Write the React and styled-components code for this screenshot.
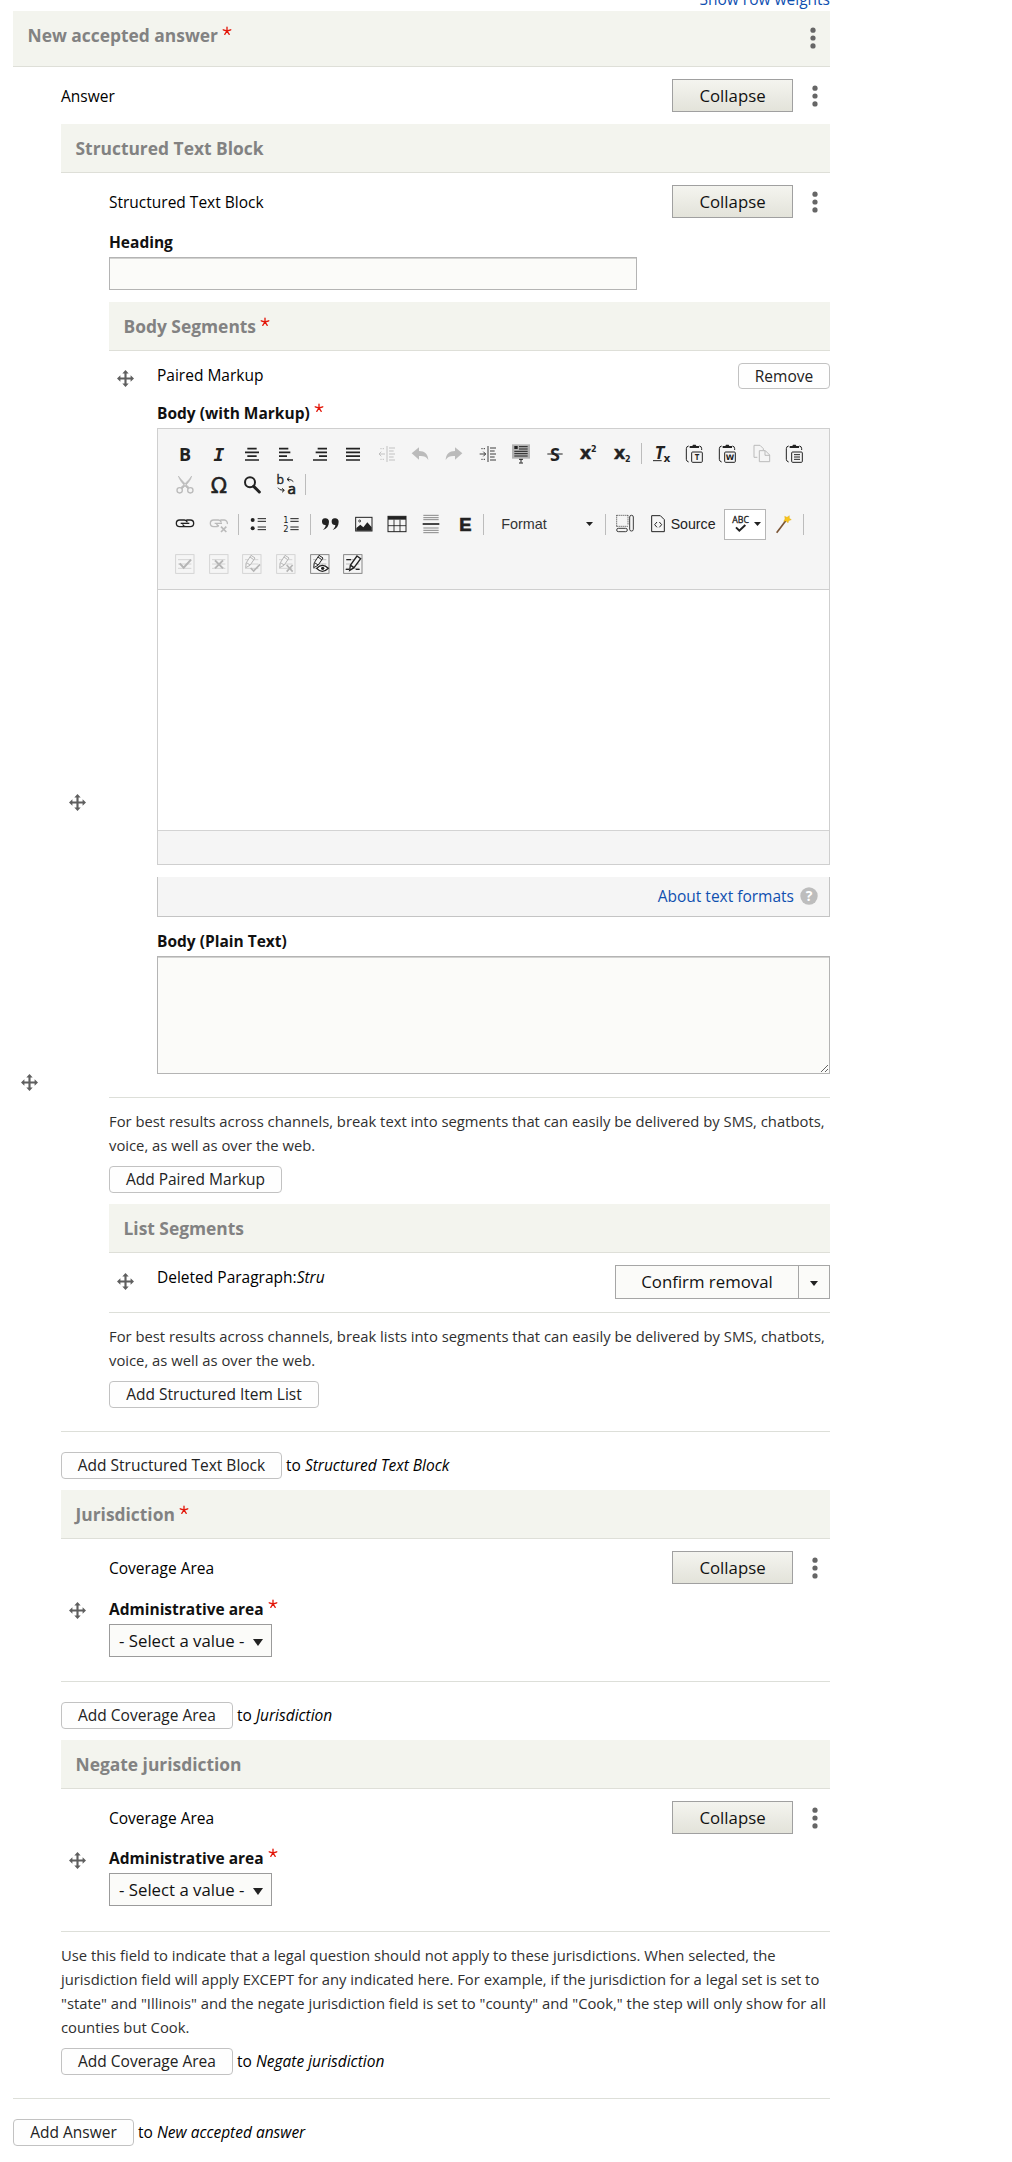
import React from "react";
import styled, { createGlobalStyle, css } from "styled-components";

const Global = createGlobalStyle`
  * { box-sizing: border-box; }
  body {
    margin: 0;
    background: #fff;
    color: #000;
    font: 15.5px/24px "Open Sans", "Noto Sans", sans-serif;
  }
  #root { height: 2162px; overflow: hidden; }
`;

/* ---------- page structure ---------- */
const Page = styled.main`
  width: 830px;
  padding-left: 13px;
`;
const WeightsBar = styled.div`
  height: 11px;
  overflow: hidden;
  display: flex;
  justify-content: flex-end;
  align-items: flex-end;
`;
const Link = styled.a`
  color: #0f4fb0;
  text-decoration: none;
  white-space: nowrap;
`;
const TableHead = styled.header`
  height: ${(p) => (p.$tall ? 56 : 49)}px;
  padding: 12px 11px 0 14.5px;
  background: #f3f4ee;
  border-bottom: 1px solid #dedfd8;
  display: flex;
  align-items: flex-start;
  justify-content: space-between;
`;
const Title = styled.h4`
  margin: 0;
  font-size: 17.4px;
  font-weight: 700;
  line-height: 24px;
  color: #828282;
  white-space: nowrap;
`;
const Row = styled.section`
  display: flex;
  border-bottom: 1px solid #dddfd9;
`;
const Handle = styled.div`
  flex: 0 0 48px;
  display: flex;
  padding: ${(p) => (p.$top ? `${p.$top}px 0 0 8px` : "0 0 0 8px")};
  align-items: ${(p) => (p.$top ? "flex-start" : "center")};
`;
const Cell = styled.div`
  flex: 1;
  min-width: 0;
  padding: 12px 0 ${(p) => p.$pb ?? 23}px;
`;
const TopBar = styled.div`
  height: ${(p) => p.$h || 33}px;
  display: flex;
  align-items: ${(p) => (p.$start ? "flex-start" : "center")};
  justify-content: space-between;
`;
const RaisedText = styled.span`
  padding-bottom: 2px;
`;
const Actions = styled.div`
  display: flex;
  align-items: center;
  gap: 13px;
  padding-right: 7px;
`;
const Nested = styled.div`
  margin-top: 12px;
`;
const AddBar = styled.div`
  display: flex;
  align-items: center;
  gap: 4px;
  padding: ${(p) => p.$p || "20px 0 11px"};
  white-space: nowrap;
`;
const Description = styled.p`
  margin: 11px 0 9px;
  font-size: 14.8px;
  line-height: 24px;
  color: #303030;
`;
const Line = styled.span`
  display: block;
  white-space: nowrap;
`;

/* ---------- controls ---------- */
const Collapse = styled.button`
  width: 121px;
  height: 33px;
  padding: 0;
  border: 1px solid #a0a0a0;
  background: linear-gradient(#f4f4ef, #e3e3da);
  font: 16.8px/30px "Open Sans", sans-serif;
  color: #111;
`;
const SmallButton = styled.button`
  height: ${(p) => p.$h || 27}px;
  width: ${(p) => p.$w}px;
  padding: 0 0 ${(p) => (p.$h ? 0 : 2)}px;
  border: 1px solid #c2c2c2;
  border-radius: 4px;
  background: #fefefe;
  font: 15.5px/22px "Open Sans", sans-serif;
  color: #222;
  white-space: nowrap;
`;
const Label = styled.label`
  display: block;
  height: 24px;
  margin: ${(p) => p.$mt || 12}px 0 3px;
  font-weight: 700;
  font-size: 15.5px;
  line-height: 24px;
  color: #111;
`;
const fieldBox = css`
  border: 1px solid #b4b4b4;
  border-radius: 0;
  background: #fbfbf9;
  box-shadow: inset 0 1px 0 #d2d2d0;
  outline: none;
`;
const TextField = styled.input`
  ${fieldBox}
  display: block;
  width: 528px;
  height: 33px;
`;
const TextArea = styled.textarea`
  ${fieldBox}
  display: block;
  width: 100%;
  height: 118px;
  resize: vertical;
`;
const SelectBox = styled.div`
  width: 163px;
  height: 33px;
  padding: 0 8px 0 9px;
  border: 1px solid #9b9b9b;
  background: #fbfbf9;
  display: flex;
  align-items: center;
  justify-content: space-between;
  font-size: 16.8px;
  white-space: nowrap;
  color: #111;
  svg { margin-top: 3px; }
`;
const SplitButton = styled.div`
  width: 215px;
  height: 34px;
  border: 1px solid #a6a6a6;
  background: #fbfbf9;
  display: grid;
  grid-template-columns: 1fr 31px;
`;
const SplitMain = styled.button`
  border: 0;
  padding: 0;
  background: none;
  font: 16.8px/30px "Open Sans", sans-serif;
  color: #111;
`;
const SplitToggle = styled.button`
  border: 0;
  border-left: 1px solid #a6a6a6;
  padding: 3px 0 0;
  background: none;
  display: grid;
  place-items: center;
`;

/* ---------- editor ---------- */
const Editor = styled.div`
  height: 437px;
  border: 1px solid #cfcfcf;
  display: flex;
  flex-direction: column;
`;
const Toolbar = styled.div`
  height: 161px;
  padding: 9px 0 0 10.5px;
  background: #f5f5f5;
  border-bottom: 1px solid #cfcfcf;
`;
const ToolRow = styled.div`
  display: flex;
  align-items: center;
  height: ${(p) => p.$h || 31}px;
  margin-top: ${(p) => p.$mt || 0}px;
`;
const Tool = styled.span`
  flex: 0 0 ${(p) => p.$w || 33.6}px;
  display: flex;
  align-items: center;
  justify-content: center;
  opacity: ${(p) => (p.$off ? 0.27 : 1)};
`;
const Sep = styled.i`
  flex: 0 0 1px;
  height: 21px;
  margin: 0 2.3px 0 2px;
  background: #bcbcbc;
`;
const Combo = styled.div`
  flex: 0 0 116px;
  display: flex;
  align-items: center;
  justify-content: space-between;
  padding: 0 10px 0 14.5px;
  font: 14.4px/20px "Liberation Sans", Arial, sans-serif;
  color: #333;
`;
const SourceTool = styled.div`
  flex: 0 0 82px;
  display: flex;
  align-items: center;
  gap: 3px;
  padding-left: 6px;
  font: 14.2px/20px "Liberation Sans", Arial, sans-serif;
  color: #222;
`;
const SpellTool = styled.div`
  flex: 0 0 42px;
  height: 31px;
  border: 1px solid #b6b6b6;
  background: #fff;
  display: flex;
  align-items: center;
  gap: 4px;
  padding-left: 5px;
`;
const EditArea = styled.div`
  flex: 1;
  background: #fff;
`;
const EditorFoot = styled.div`
  height: 34px;
  background: #f5f5f5;
  border-top: 1px solid #d3d3d3;
`;
const FormatBar = styled.div`
  height: 40px;
  margin-top: 12px;
  padding: 0 11px 2px;
  border: 1px solid #c4c4c4;
  border-top: 0;
  background: #f5f5f5;
  display: flex;
  align-items: center;
  justify-content: flex-end;
  gap: 6px;
`;

/* ---------- drawings ---------- */
const Star = styled.svg`
  width: 10px;
  height: 10px;
  margin-left: 4px;
  vertical-align: 6px;
`;
const Required = () => (
  <Star viewBox="0 0 18 18" stroke="#e3170a" strokeWidth="2.4" strokeLinecap="round">
    <path d="M9 9V2M9 9L2.2 6.8M9 9l6.8-2.2M9 9l-4 6M9 9l4 6" />
  </Star>
);
const Dots = () => (
  <svg width="6" height="24" viewBox="0 0 6 24" fill="#666">
    <circle cx="3" cy="4.2" r="2.6" />
    <circle cx="3" cy="12" r="2.6" />
    <circle cx="3" cy="19.9" r="2.6" />
  </svg>
);
const Move = () => (
  <svg width="17" height="17" viewBox="0 0 16 16" fill="#5f5f5f">
    <path d="M8 0L11 3.2H9v3.8h3.8V5L16 8l-3.2 3V9H9v3.8h2L8 16l-3-3.2h2V9H3.2v2L0 8l3.2-3v2H7V3.2H5z" />
  </svg>
);
const Caret = ({ w = 8, h = 5 }) => (
  <svg width={w} height={h} viewBox="0 0 8 5" preserveAspectRatio="none" fill="#222">
    <path d="M0 0h8L4 5z" />
  </svg>
);
const Ico = ({ children, ...rest }) => (
  <svg width="20" height="20" viewBox="0 0 60 60" fill="none" stroke="#222" strokeWidth="3" overflow="visible" {...rest}>
    {children}
  </svg>
);
const T = ({ x, y, s, f = "Open Sans", w = 700, i, children, ...rest }) => (
  <text x={x} y={y} fontSize={s} fontFamily={f} fontWeight={w} fontStyle={i ? "italic" : "normal"} fill="#222" stroke="none" textAnchor="middle" {...rest}>
    {children}
  </text>
);
const Bars = ({ rows }) => (
  <Ico strokeWidth="5">
    <path d={rows.map(([a, b], n) => `M${a} ${14 + n * 11.3}H${b}`).join("")} />
  </Ico>
);
const Indent = ({ out }) => (
  <Ico strokeWidth="2.6">
    <path d="M30 6v48" />
    <path d="M36 12h18M36 21h14M36 30h18M36 39h14M36 48h18" />
    <path d="M10 14h14M10 46h14" strokeDasharray="4 3" />
    <path d={out ? "M6 30h18M13 23l-7 7 7 7" : "M5 30h18M16 23l7 7-7 7"} />
  </Ico>
);
const Clip = ({ children }) => (
  <Ico strokeWidth="3">
    <path d="M11 6q-7 1-7 8v32q0 6 7 8M43 6q7 1 7 8v4" />
    <path d="M14 6h8l2-4h8l2 4h8v6H14z" fill="#222" stroke="none" />
    <rect x="20" y="24" width="32" height="31" rx="3" />
    {children}
  </Ico>
);
const Scayt = ({ pencil, dark, children }) => (
  <Ico stroke={dark ? "#222" : "#b5b5b5"} strokeWidth="3">
    <rect x="2" y="2" width="55" height="56" strokeWidth="2.6" stroke={dark ? "#777" : "#cfcfcf"} />
    <path d="M9 17h40M9 30h40M9 43h40" stroke={dark ? "#bbb" : "#d4d4d4"} />
    {pencil && <path d="M27 4l12 8-15 22-13 7 2-15zM14 26l10 7M24 9l11 8" fill="#f5f5f5" />}
    {children}
  </Ico>
);

const HeadDots = styled.div`
  display: flex;
  padding: 3px 3px 0 0;
`;
const FieldHead = ({ children, required, tall, dots }) => (
  <TableHead $tall={tall}>
    <Title>
      {children}
      {required && <Required />}
    </Title>
    {dots && (
      <HeadDots>
        <Dots />
      </HeadDots>
    )}
  </TableHead>
);
const DotWrap = styled.span`
  width: 17px;
  display: flex;
  justify-content: center;
`;
const ItemBar = ({ children }) => (
  <TopBar>
    <span>{children}</span>
    <Actions>
      <Collapse>Collapse</Collapse>
      <DotWrap>
        <Dots />
      </DotWrap>
    </Actions>
  </TopBar>
);

const EditorToolbar = () => (
  <Toolbar>
    <ToolRow>
      <Tool><Ico><T x={30} y={50} s={54}>B</T></Ico></Tool>
      <Tool><Ico><T x={30} y={50} s={54} f="DejaVu Sans Mono" i>I</T></Ico></Tool>
      <Tool><Bars rows={[[16, 44], [9, 51], [16, 44], [9, 51]]} /></Tool>
      <Tool><Bars rows={[[9, 37], [9, 43], [9, 33], [9, 51]]} /></Tool>
      <Tool><Bars rows={[[23, 51], [17, 51], [27, 51], [9, 51]]} /></Tool>
      <Tool><Bars rows={[[9, 51], [9, 51], [9, 51], [9, 51]]} /></Tool>
      <Tool $off><Indent out /></Tool>
      <Tool $off><Ico><path d="M5 28L27 10v11c17 0 27 9 28 27-7-11-15-13-28-12v11z" fill="#222" stroke="none" /></Ico></Tool>
      <Tool $off><Ico><path d="M55 28L33 10v11C16 21 6 30 5 48c7-11 15-13 28-12v11z" fill="#222" stroke="none" /></Ico></Tool>
      <Tool><Indent /></Tool>
      <Tool>
        <Ico>
          <rect x="3" y="1" width="54" height="43" fill="#b3b3b3" stroke="none" />
          <rect x="10" y="6" width="10" height="9" fill="#222" stroke="none" />
          <path d="M24 8h26M24 15h26M10 22h40M10 29h40M10 36h40" />
          <path d="M24 46h12M30 46v10M24 57h12" />
        </Ico>
      </Tool>
      <Tool><Ico><T x={30} y={50} s={54}>S</T><path d="M7 30h46" /></Ico></Tool>
      <Tool><Ico><T x={23} y={46} s={54} f="DejaVu Sans" stroke="#222" strokeWidth="1">x</T><T x={47} y={24} s={24} f="DejaVu Sans">2</T></Ico></Tool>
      <Tool><Ico><T x={23} y={44} s={54} f="DejaVu Sans" stroke="#222" strokeWidth="1">x</T><T x={47} y={54} s={24} f="DejaVu Sans">2</T></Ico></Tool>
      <Sep />
      <Tool><Ico><T x={26} y={44} s={52} f="DejaVu Sans Mono" i>T</T><T x={48} y={55} s={32} f="DejaVu Sans">x</T><path d="M6 50h26" /></Ico></Tool>
      <Tool><Clip><T x={36} y={48} s={24}>T</T></Clip></Tool>
      <Tool><Clip><T x={36} y={48} s={23} f="DejaVu Sans">W</T></Clip></Tool>
      <Tool $off><Ico><path d="M16 40H6V4h18l10 10v4" /><path d="M22 20h18l13 13v20H22zM39 20v14h14" /></Ico></Tool>
      <Tool><Clip><path d="M27 32h18M27 39h18M27 46h18" /></Clip></Tool>
    </ToolRow>
    <ToolRow>
      <Tool $off>
        <Ico fill="#222">
          <path d="M10 3c4 12 12 22 20 30l8 8 4-4C32 28 20 16 10 3zM50 3c-3 13-12 22-20 30l-8 8-4-4C28 28 42 16 50 3z" stroke="#222" strokeWidth="2" />
          <circle cx="14" cy="46" r="8" fill="none" strokeWidth="4" />
          <circle cx="46" cy="46" r="8" fill="none" strokeWidth="4" />
        </Ico>
      </Tool>
      <Tool><Ico><T x={30} y={53} s={64} f="DejaVu Sans" w={400} stroke="#222" strokeWidth="1.5">Ω</T></Ico></Tool>
      <Tool><Ico><circle cx="24" cy="22" r="15" strokeWidth="6" /><path d="M35 34l17 17" strokeWidth="9" strokeLinecap="round" /></Ico></Tool>
      <Tool>
        <Ico>
          <T x={13} y={26} s={37} w={400} stroke="#222" strokeWidth="1">b</T>
          <T x={47} y={56} s={46} w={400} stroke="#222" strokeWidth="2">a</T>
          <path d="M52 20q-4-7-18-7M40 7l-7 6 7 6M6 38q3 8 18 8M18 40l7 6-7 6" />
        </Ico>
      </Tool>
      <Sep />
    </ToolRow>
    <ToolRow $h={40} $mt={4}>
      <Tool>
        <Ico strokeWidth="4">
          <path d="M26 38H14a10 10 0 010-20h14a10 10 0 019 7M34 18h12a10 10 0 010 20H32a10 10 0 01-9-7" />
          <path d="M17 28h26" />
        </Ico>
      </Tool>
      <Tool $off>
        <Ico strokeWidth="4">
          <path d="M26 38H14a10 10 0 010-20h14a10 10 0 019 7M34 18h12a10 10 0 019 12M30 36q-6-1-7-6M17 28h22" />
          <path d="M36 38l16 16M52 38L36 54" strokeWidth="5" />
        </Ico>
      </Tool>
      <Sep />
      <Tool>
        <Ico>
          <circle cx="14" cy="18" r="6" fill="#222" stroke="none" />
          <circle cx="14" cy="43" r="6" fill="#222" stroke="none" />
          <path d="M29 14h25M29 22h25M29 39h25M29 47h25" />
        </Ico>
      </Tool>
      <Tool>
        <Ico>
          <T x={15} y={26} s={25} w={400} f="DejaVu Sans">1</T>
          <T x={15} y={54} s={25} w={400} f="DejaVu Sans">2</T>
          <path d="M28 14h25M28 22h25M28 39h25M28 47h25" />
        </Ico>
      </Tool>
      <Sep />
      <Tool>
        <Ico>
          <path d="M15 13a10 10 0 0112 10c0 12-6 21-18 25 6-6 8-10 8-15A10 10 0 0115 13zM44 13a10 10 0 0112 10c0 12-6 21-18 25 6-6 8-10 8-15A10 10 0 0144 13z" fill="#222" stroke="none" />
        </Ico>
      </Tool>
      <Tool>
        <Ico>
          <rect x="5" y="10" width="49" height="41" />
          <circle cx="17" cy="21" r="3" strokeWidth="2.5" />
          <path d="M7 50V42l12-10 9 8 12-15 13 15v10z" fill="#222" stroke="none" />
        </Ico>
      </Tool>
      <Tool>
        <Ico>
          <rect x="3" y="7" width="54" height="46" />
          <path d="M3 12h54" strokeWidth="10" />
          <path d="M3 35h54M21 17v36M39 17v36" strokeWidth="2.6" />
        </Ico>
      </Tool>
      <Tool>
        <Ico>
          <path d="M7 4h46M7 11h46M7 17h46M7 42h46M7 49h46M7 56h46" strokeWidth="2.6" stroke="#777" />
          <path d="M5 30h50" strokeWidth="5" />
        </Ico>
      </Tool>
      <Tool><Ico><T x={31} y={50} s={55} f="Liberation Sans" stroke="#222" strokeWidth="2">E</T></Ico></Tool>
      <Sep />
      <Combo>Format<Caret w={7} h={4} /></Combo>
      <Sep />
      <Tool>
        <Ico strokeWidth="2.6">
          <path d="M5 4v34M5 4h34M39 4v30M5 37h34" strokeDasharray="3 3" />
          <rect x="44" y="4" width="11" height="47" rx="5" />
          <rect x="5" y="43" width="32" height="10" rx="5" />
        </Ico>
      </Tool>
      <SourceTool>
        <Ico>
          <path d="M11 5h26l12 12v36H11zM27 24l-7 8 7 8M34 24l7 8-7 8" />
        </Ico>
        Source
      </SourceTool>
      <SpellTool>
        <Ico>
          <T x={32} y={28} s={29} w={400} textLength="50" lengthAdjust="spacingAndGlyphs" stroke="#222" strokeWidth="1">ABC</T>
          <path d="M18 40l10 10 18-17" strokeWidth="6" />
        </Ico>
        <Caret w={7} h={4} />
      </SpellTool>
      <Tool $w={35}>
        <Ico>
          <path d="M11 56L40 18" stroke="#7a5434" strokeWidth="5" />
          <path d="M35 7l7 3 7-5v8l6 4-8 3-2 7-5-6-8 1 4-7z" fill="#f8c51c" stroke="#dca40e" strokeWidth="1" />
        </Ico>
      </Tool>
      <Sep />
    </ToolRow>
    <ToolRow $h={40}>
      <Tool><Scayt><path d="M14 28l12 13 22-24" strokeWidth="6" /></Scayt></Tool>
      <Tool><Scayt><path d="M18 19l24 24M42 19L18 43" strokeWidth="6" /></Scayt></Tool>
      <Tool><Scayt pencil><path d="M26 42l9 9 19-20" strokeWidth="5" /></Scayt></Tool>
      <Tool><Scayt pencil><path d="M32 33l18 20M50 33L32 53" strokeWidth="5" /></Scayt></Tool>
      <Tool>
        <Scayt pencil dark>
          <path d="M20 43q17-18 35 0-18 18-35 0z" fill="#fff" strokeWidth="4" />
          <circle cx="38" cy="43" r="5" fill="#222" stroke="none" />
        </Scayt>
      </Tool>
      <Tool>
        <Scayt dark>
          <path d="M42 6l11 8-20 27-13 8 2-15zM23 34l10 7" fill="#f5f5f5" strokeWidth="4" />
          <path d="M8 46h10M38 46h12M10 17h14" strokeWidth="4" />
        </Scayt>
      </Tool>
    </ToolRow>
  </Toolbar>
);

const CoverageItem = ({ mt, pb }) => (
  <Row>
    <Handle>
      <Move />
    </Handle>
    <Cell $pb={pb}>
      <ItemBar>Coverage Area</ItemBar>
      <Label $mt={mt}>
        Administrative area
        <Required />
      </Label>
      <SelectBox>
        - Select a value - <Caret w={10} h={7} />
      </SelectBox>
    </Cell>
  </Row>
);
const HelpIcon = () => (
  <svg width="18" height="18" viewBox="0 0 18 18">
    <circle cx="9" cy="9" r="8.7" fill="#bdbdbd" />
    <text x="9" y="14" fontSize="14" fontWeight="700" fontFamily="Open Sans" textAnchor="middle" fill="#fff">?</text>
  </svg>
);

export default function App() {
  return (
    <Page>
      <Global />
      <WeightsBar>
        <Link>Show row weights</Link>
      </WeightsBar>
      <FieldHead tall required dots>New accepted answer</FieldHead>
      <Row>
        <Handle>
          <Move />
        </Handle>
        <Cell>
          <ItemBar>Answer</ItemBar>
          <Nested>
            <FieldHead>Structured Text Block</FieldHead>
            <Row>
              <Handle>
                <Move />
              </Handle>
              <Cell>
                <ItemBar>Structured Text Block</ItemBar>
                <Label>Heading</Label>
                <TextField />
                <Nested>
                  <FieldHead required>Body Segments</FieldHead>
                  <Row>
                    <Handle $top={19}>
                      <Move />
                    </Handle>
                    <Cell>
                      <TopBar $h={26}>
                        <RaisedText>Paired Markup</RaisedText>
                        <SmallButton $w={92} $h={26}>Remove</SmallButton>
                      </TopBar>
                      <Label>
                        Body (with Markup)
                        <Required />
                      </Label>
                      <Editor>
                        <EditorToolbar />
                        <EditArea />
                        <EditorFoot />
                      </Editor>
                      <FormatBar>
                        <Link>About text formats</Link>
                        <HelpIcon />
                      </FormatBar>
                      <Label>Body (Plain Text)</Label>
                      <TextArea />
                    </Cell>
                  </Row>
                </Nested>
                <Description>
                  <Line>For best results across channels, break text into segments that can easily be delivered by SMS, chatbots,</Line>
                  <Line>voice, as well as over the web.</Line>
                </Description>
                <AddBar $p="0 0 11px">
                  <SmallButton $w={173}>Add Paired Markup</SmallButton>
                </AddBar>
                <FieldHead>List Segments</FieldHead>
                <Row>
                  <Handle $top={20}>
                    <Move />
                  </Handle>
                  <Cell $pb={13}>
                    <TopBar $h={34} $start>
                      <span>
                        Deleted Paragraph:<em>Stru</em>
                      </span>
                      <SplitButton>
                        <SplitMain>Confirm removal</SplitMain>
                        <SplitToggle>
                          <Caret />
                        </SplitToggle>
                      </SplitButton>
                    </TopBar>
                  </Cell>
                </Row>
                <Description>
                  <Line>For best results across channels, break lists into segments that can easily be delivered by SMS, chatbots,</Line>
                  <Line>voice, as well as over the web.</Line>
                </Description>
                <AddBar $p="0">
                  <SmallButton $w={210}>Add Structured Item List</SmallButton>
                </AddBar>
              </Cell>
            </Row>
            <AddBar>
              <SmallButton $w={221}>Add Structured Text Block</SmallButton>
              <RaisedText>
                to <em>Structured Text Block</em>
              </RaisedText>
            </AddBar>
            <FieldHead required>Jurisdiction</FieldHead>
            <CoverageItem mt={13} pb={24} />
            <AddBar>
              <SmallButton $w={172}>Add Coverage Area</SmallButton>
              <RaisedText>
                to <em>Jurisdiction</em>
              </RaisedText>
            </AddBar>
            <FieldHead>Negate jurisdiction</FieldHead>
            <CoverageItem mt={12} pb={25} />
            <Description>
              <Line>Use this field to indicate that a legal question should not apply to these jurisdictions. When selected, the</Line>
              <Line>jurisdiction field will apply EXCEPT for any indicated here. For example, if the jurisdiction for a legal set is set to</Line>
              <Line>"state" and "Illinois" and the negate jurisdiction field is set to "county" and "Cook," the step will only show for all</Line>
              <Line>counties but Cook.</Line>
            </Description>
            <AddBar $p="0">
              <SmallButton $w={172}>Add Coverage Area</SmallButton>
              <RaisedText>
                to <em>Negate jurisdiction</em>
              </RaisedText>
            </AddBar>
          </Nested>
        </Cell>
      </Row>
      <AddBar $p="20px 0 0">
        <SmallButton $w={121}>Add Answer</SmallButton>
        <RaisedText>
          to <em>New accepted answer</em>
        </RaisedText>
      </AddBar>
    </Page>
  );
}
